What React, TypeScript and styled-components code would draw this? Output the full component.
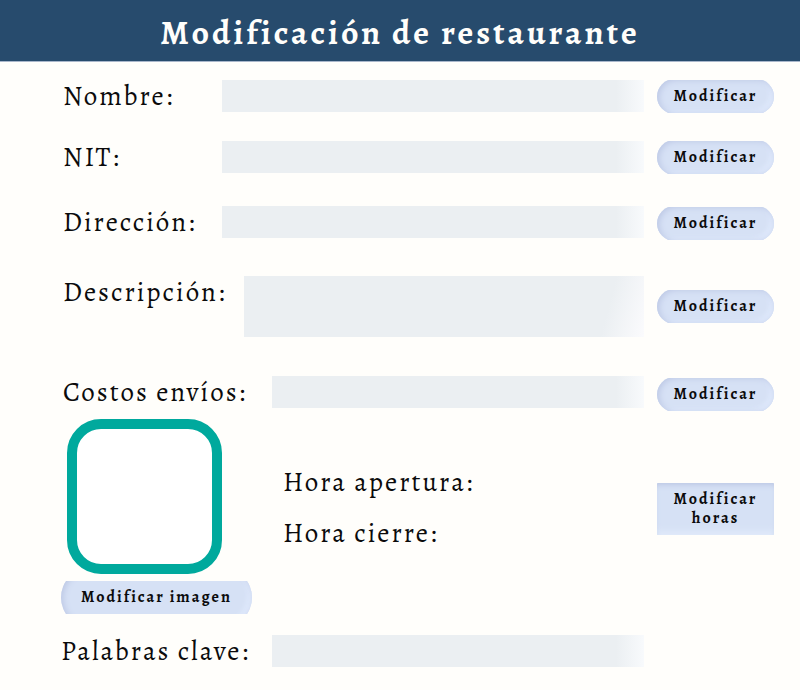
import React from 'react';
import styled, { createGlobalStyle } from 'styled-components';

const GlobalStyle = createGlobalStyle`
  *, *::before, *::after { box-sizing: border-box; }
  body {
    margin: 0;
    background: #fffefb;
    color: #0b0b0c;
    font-family: Alegreya, "Liberation Serif", serif;
  }
`;

const Header = styled.header`
  display: flex;
  justify-content: center;
  padding: 15px 16px 10px;
  background: #274b6d;
  border-bottom: 1px solid #a9b7cb;
`;

const Title = styled.h1`
  margin: 0;
  color: #fffefb;
  font-size: 34px;
  line-height: 36px;
  font-weight: 700;
  letter-spacing: 3px;
`;

const Form = styled.form`
  padding: 18px 26px 20px 63px;
`;

const Row = styled.div<{ $gap?: number }>`
  display: flex;
  align-items: flex-start;
  margin-top: ${(p) => p.$gap ?? 0}px;
`;

const labelText = `
  font-size: 27px;
  line-height: 32px;
  letter-spacing: 2px;
  white-space: nowrap;
`;

const Label = styled.label<{ $width: number }>`
  ${labelText}
  flex: 0 0 ${(p) => p.$width}px;
`;

const fieldLook = `
  display: block;
  flex: 1 1 0;
  min-width: 0;
  margin: 0 13px 0 0;
  padding: 4px 10px;
  border: 0;
  border-radius: 0;
  outline-offset: 2px;
  background: linear-gradient(to right, #ebeff2 calc(100% - 28px), #f8fafc);
  font: inherit;
  font-size: 20px;
`;

const Field = styled.input`
  ${fieldLook}
  height: 32px;
`;

const Area = styled.textarea`
  ${fieldLook}
  height: 61px;
  resize: none;
  background: linear-gradient(105deg, #ebeff2 calc(100% - 42px), #fbfbfd);
`;

const Button = styled.button<{ $overflow?: number; $width?: number }>`
  position: relative;
  isolation: isolate;
  overflow: hidden;
  flex: none;
  width: ${(p) => p.$width ?? 117}px;
  height: 33px;
  padding: 0;
  border: 0;
  background: none;
  color: #0b0b0c;
  font: inherit;
  font-size: 16px;
  line-height: 19px;
  font-weight: 700;
  letter-spacing: 2px;
  cursor: pointer;

  &::before {
    content: '';
    position: absolute;
    z-index: -1;
    inset: ${(p) => -(p.$overflow ?? 1)}px 0;
    border-radius: 32px;
    background: #d6e1f5;
    box-shadow: inset 2px 1px 6px #bcc7e4, inset -4px -3px 5px #e0eafc;
  }
`;

const HoursButton = styled(Button)`
  height: 52px;

  &::before {
    inset: 0;
    border-radius: 1px;
    box-shadow: inset 0 4px 6px -3px #b5c0df, inset 0 -6px 6px -2px #e0eafa;
  }
`;

const ButtonSlot = styled.div<{ $top: number }>`
  display: flex;
  margin-top: ${(p) => p.$top}px;
`;

const Media = styled.section`
  display: flex;
  align-items: flex-start;
  margin: 8px 0 0 -2px;
`;

const PhotoColumn = styled.div`
  flex: 0 0 222px;
`;

const Photo = styled.div`
  width: 155px;
  height: 155px;
  margin: 0 0 7px 6px;
  border: 10px solid #00a99d;
  border-radius: 34px;
  background: #fff;
`;

const Hours = styled.div`
  display: flex;
  flex: 1;
  flex-direction: column;
  gap: 19px;
  padding-top: 47px;
`;

const HourText = styled.span`
  ${labelText}
`;

const EmptySlot = styled.div`
  flex: 0 0 117px;
`;

const KeywordRow = styled(Row)`
  margin-left: -2px;
`;

interface TextRowProps {
  id: string;
  label: string;
  width: number;
  gap?: number;
  buttonTop?: number;
}

function TextRow({ id, label, width, gap, buttonTop = 0 }: TextRowProps) {
  return (
    <Row $gap={gap}>
      <Label htmlFor={id} $width={width}>{label}</Label>
      <Field id={id} name={id} type="text" />
      <ButtonSlot $top={buttonTop}>
        <Button type="button">Modificar</Button>
      </ButtonSlot>
    </Row>
  );
}

export default function App() {
  return (
    <>
      <GlobalStyle />
      <Header>
        <Title>Modificación de restaurante</Title>
      </Header>
      <main>
        <Form>
          <TextRow id="nombre" label="Nombre:" width={159} />
          <TextRow id="nit" label="NIT:" width={159} gap={28} />
          <TextRow id="direccion" label="Dirección:" width={159} gap={32} buttonTop={1} />
          <Row $gap={36}>
            <Label htmlFor="descripcion" $width={181}>Descripción:</Label>
            <Area id="descripcion" name="descripcion" />
            <ButtonSlot $top={14}>
              <Button type="button">Modificar</Button>
            </ButtonSlot>
          </Row>
          <TextRow id="costos" label="Costos envíos:" width={209} gap={39} buttonTop={2} />
          <Media>
            <PhotoColumn>
              <Photo role="img" aria-label="Imagen del restaurante" />
              <Button type="button" $width={191} $overflow={13}>Modificar imagen</Button>
            </PhotoColumn>
            <Hours>
              <HourText>Hora apertura:</HourText>
              <HourText>Hora cierre:</HourText>
            </Hours>
            <ButtonSlot $top={64}>
              <HoursButton type="button">
                Modificar<br />horas
              </HoursButton>
            </ButtonSlot>
          </Media>
          <KeywordRow $gap={21}>
            <Label htmlFor="palabras" $width={211}>Palabras clave:</Label>
            <Field id="palabras" name="palabras" type="text" />
            <EmptySlot />
          </KeywordRow>
        </Form>
      </main>
    </>
  );
}
